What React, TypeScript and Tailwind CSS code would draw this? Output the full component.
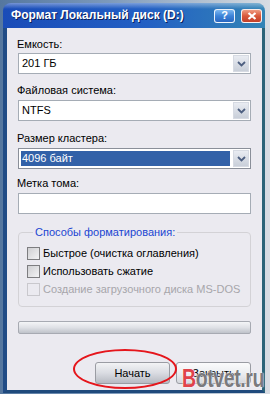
import type { ReactNode } from 'react'

function Chevron() {
  return (
    <svg width="9" height="6" viewBox="0 0 9 6" className="block">
      <path d="M1 1 L4.5 4.5 L8 1" fill="none" stroke="#4d5f80" strokeWidth="1.8" />
    </svg>
  )
}

function Select({ value, selected }: { value: string; selected?: boolean }) {
  return (
    <div
      className={`h-[21px] flex items-stretch bg-white border ${
        selected ? 'border-[#8a8f99]' : 'border-[#a5acb5]'
      }`}
    >
      <div className="flex-1 flex items-center p-[2px]">
        <div
          className={`h-full w-full flex items-center pl-[1px] ${
            selected ? 'bg-[#3261a8] text-white' : 'text-black'
          }`}
        >
          {value}
        </div>
      </div>
      <div className="w-[16px] m-[1px] flex items-center justify-center bg-gradient-to-b from-[#e9ecf2] to-[#c9cfd9] border border-[#d6dae2]">
        <Chevron />
      </div>
    </div>
  )
}

function Check({ label, disabled }: { label: string; disabled?: boolean }) {
  return (
    <div className={`flex items-center h-[13px] gap-[3px] ${disabled ? 'text-[#a7a6ab]' : 'text-black'}`}>
      <div
        className={`w-[13px] h-[13px] border ${
          disabled
            ? 'border-[#c9c8cd] bg-[#ebeaf0]'
            : 'border-[#7d7d80] bg-gradient-to-br from-[#cfcfd2] to-[#f3f3f5]'
        }`}
      />
      <span>{label}</span>
    </div>
  )
}

function Button({ children, dark }: { children: ReactNode; dark?: boolean }) {
  return (
    <div
      className={`w-[75px] h-[22px] rounded-[3px] border border-[#9a9ca3] flex items-center justify-center text-black ${
        dark
          ? 'bg-gradient-to-b from-[#f2f3f5] via-[#dadce2] to-[#b7bac2]'
          : 'bg-gradient-to-b from-[#fbfbfc] via-[#eceef1] to-[#d5d8de]'
      }`}
    >
      {children}
    </div>
  )
}

export default function App() {
  return (
    <div className="relative w-[270px] h-[394px] overflow-hidden bg-[linear-gradient(90deg,#55779f_0%,#7c99bb_40%,#b9c6d4_80%,#d9dde3_100%)] pl-[3px] pt-[3px] font-['Liberation_Sans',sans-serif] text-[11px] leading-[13px]">
      <div className="w-[262px] h-[390px] flex flex-col rounded-t-[8px] overflow-hidden">
        {/* title bar */}
        <div className="h-[25px] shrink-0 relative flex items-center pl-[8px] pr-[3px] bg-[linear-gradient(90deg,#1a4cb8_0%,#2360c4_55%,#3384b6_100%)]">
          <div className="absolute inset-x-0 top-0 h-[6px] bg-gradient-to-b from-white/40 to-transparent" />
          <span className="relative text-white font-bold text-[12px] [text-shadow:1px_1px_0_#0a1e5a]">
            Формат Локальный диск (D:)
          </span>
          <div className="relative ml-auto flex items-center gap-[6px]">
            <div className="w-[21px] h-[14px] rounded-[3px] border border-white/90 bg-gradient-to-b from-[#7cb7f0] via-[#3c83d8] to-[#2a66c0] flex items-center justify-center text-white font-bold text-[11px] leading-none">
              ?
            </div>
            <div className="w-[21px] h-[14px] rounded-[3px] border border-white/90 bg-gradient-to-b from-[#ee9a80] via-[#d9583a] to-[#c2402a] flex items-center justify-center">
              <svg width="10" height="8" viewBox="0 0 10 8">
                <path d="M1.5 1 L8.5 7 M8.5 1 L1.5 7" stroke="white" strokeWidth="2.2" />
              </svg>
            </div>
          </div>
        </div>

        {/* client */}
        <div className="flex-1 flex flex-col bg-[#ebeaf0] border-l-[4px] border-l-[#214c86] border-r-[3px] border-r-[#2c6478] border-b-[3px] border-b-[#1f4a7c] px-[11px] pt-[10px]">
          <div className="-ml-px">Емкость:</div>
          <div className="mt-[2px]">
            <Select value="201 ГБ" />
          </div>

          <div className="-ml-px mt-[10px]">Файловая система:</div>
          <div className="mt-[3px]">
            <Select value="NTFS" />
          </div>

          <div className="-ml-px mt-[11px]">Размер кластера:</div>
          <div className="mt-[3px]">
            <Select value="4096 байт" selected />
          </div>

          <div className="-ml-px mt-[8px]">Метка тома:</div>
          <div className="mt-[3px] h-[21px] bg-white border border-[#a5acb5]" />

          <fieldset className="mt-[12px] border border-[#d3d2d6] rounded-[4px] px-[8px] pt-[8px] pb-[10px] flex flex-col gap-[5px]">
            <legend className="ml-[6px] px-[2px] text-[#2146d2]">Способы форматирования:</legend>
            <Check label="Быстрое (очистка оглавления)" />
            <Check label="Использовать сжатие" />
            <Check label="Создание загрузочного диска MS-DOS" disabled />
          </fieldset>

          <div className="mt-[14px] h-[13px] rounded-[2px] border border-[#a7aab2] bg-gradient-to-b from-[#f4f5f7] via-[#dfe1e6] to-[#bfc3ca]" />

          <div className="mt-[28px] flex justify-end gap-[6px]">
            <Button dark>Начать</Button>
            <Button>Закрыть</Button>
          </div>
        </div>
      </div>

      {/* red ellipse annotation */}
      <div className="absolute left-[73px] top-[349px] w-[104px] h-[40px] rounded-[50%] border-2 border-[#e5161c]" />

      {/* watermark */}
      <div className="absolute left-[182px] top-[364px] origin-left scale-x-[0.78] whitespace-nowrap font-bold text-[25px] leading-[28px] tracking-[-0.5px] [text-shadow:0_0_2px_#fff,0_0_1px_#fff]">
        <span className="text-[#e0434b]">B</span>
        <span className="text-[#7a7a7e]">otvet.ru</span>
      </div>
    </div>
  )
}
